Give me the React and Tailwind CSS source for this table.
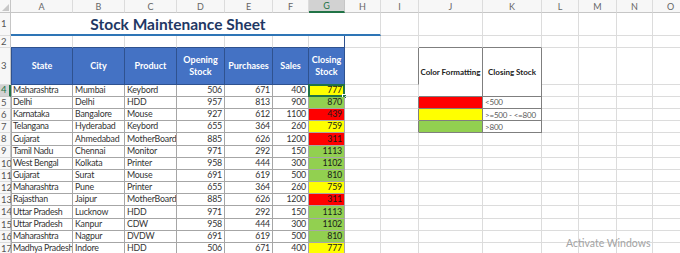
import React from "react";
import { twMerge } from "tailwind-merge";

const letters = ["A", "B", "C", "D", "E", "F", "G", "H", "I", "J", "K", "L", "M", "N", "O"];

const stock = [
  ["Maharashtra", "Mumbai", "Keybord", 506, 671, 400, 777, "y"],
  ["Delhi", "Delhi", "HDD", 957, 813, 900, 870, "g"],
  ["Karnataka", "Bangalore", "Mouse", 927, 612, 1100, 439, "r"],
  ["Telangana", "Hyderabad", "Keybord", 655, 364, 260, 759, "y"],
  ["Gujarat", "Ahmedabad", "MotherBoard", 885, 626, 1200, 311, "r"],
  ["Tamil Nadu", "Chennai", "Monitor", 971, 292, 150, 1113, "g"],
  ["West Bengal", "Kolkata", "Printer", 958, 444, 300, 1102, "g"],
  ["Gujarat", "Surat", "Mouse", 691, 619, 500, 810, "g"],
  ["Maharashtra", "Pune", "Printer", 655, 364, 260, 759, "y"],
  ["Rajasthan", "Jaipur", "MotherBoard", 885, 626, 1200, 311, "r"],
  ["Uttar Pradesh", "Lucknow", "HDD", 971, 292, 150, 1113, "g"],
  ["Uttar Pradesh", "Kanpur", "CDW", 958, 444, 300, 1102, "g"],
  ["Maharashtra", "Nagpur", "DVDW", 691, 619, 500, 810, "g"],
  ["Madhya Pradesh", "Indore", "HDD", 506, 671, 400, 777, "y"],
];

const fills = { y: "bg-[#ffff00]", g: "bg-[#92d050]", r: "bg-[#ff0000]" };

const legend = [
  ["r", "<500"],
  ["y", ">=500 - <=800"],
  ["g", ">800"],
];

const Cell = ({ className, children }) => (
  <div
    className={twMerge(
      "relative flex items-center overflow-hidden whitespace-nowrap border-r border-b border-[#dcdcdc] px-[2px] text-[8.8px] leading-none tracking-[-0.2px] text-[#333]",
      className
    )}
  >
    {children}
  </div>
);

const RowNum = ({ n, active }) => (
  <div
    className={
      active
        ? "flex items-center border-r-2 border-b border-r-[#217346] border-b-[#c6c6c6] bg-[#d2d2d2] pl-[1px] text-[9.5px] leading-none text-[#217346]"
        : "flex items-center border-r border-b border-r-[#c6c6c6] border-b-[#dcdcdc] bg-[#f7f7f7] pl-[1px] text-[9.5px] leading-none text-[#555]"
    }
  >
    {n}
  </div>
);

const blank = (from, to, extra = {}) =>
  letters.slice(from, to).map((l) => <Cell key={l} className={extra[l]} />);

const App = () => {
  return (
    <div className="relative h-[253px] w-[680px] overflow-hidden bg-white font-['Lato',sans-serif]">
      <div className="grid grid-cols-[11px_62px_52px_52px_48px_48px_36px_36px_36px_38px_64px_59px_37px_38px_36px_36px] grid-rows-[13px_23px_12px_36.6px_repeat(14,12.2px)]">
        {/* ---- column letters ---- */}
        <div className="relative border-r border-b border-[#c6c6c6] bg-[#f7f7f7]">
          <svg className="absolute right-[1px] bottom-[1px]" width="7" height="7" viewBox="0 0 7 7">
            <polygon points="7,0 7,7 0,7" fill="#c8c8c8" />
          </svg>
        </div>
        {letters.map((l) =>
          l === "G" ? (
            <div
              key={l}
              className="flex items-center justify-center border-r border-b-2 border-r-[#c6c6c6] border-b-[#217346] bg-[#d2d2d2] text-[9px] leading-none text-[#217346]"
            >
              {l}
            </div>
          ) : (
            <div
              key={l}
              className="flex items-center justify-center border-r border-b border-r-[#dcdcdc] border-b-[#c6c6c6] bg-[#f7f7f7] text-[9px] leading-none text-[#666]"
            >
              {l}
            </div>
          )
        )}

        {/* ---- row 1 : title ---- */}
        <RowNum n={1} />
        <div className="col-span-7 flex items-end justify-center border-b-2 border-b-[#2e75b6] pb-[2px] text-[15.5px] leading-none font-bold text-[#1f3864]">
          Stock Maintenance Sheet
        </div>
        <Cell className="border-b-2 border-b-[#2e75b6]" />
        {blank(8, 15)}

        {/* ---- row 2 ---- */}
        <RowNum n={2} />
        {blank(0, 15, {
          A: "border-b-[#2f528f]",
          B: "border-b-[#2f528f]",
          C: "border-b-[#2f528f]",
          D: "border-b-[#2f528f]",
          E: "border-b-[#2f528f]",
          F: "border-b-[#2f528f]",
          G: "border-r-[#2f528f] border-b-[#2f528f]",
          J: "border-b-[#7f7f7f]",
          K: "border-b-[#7f7f7f]",
        })}

        {/* ---- row 3 : table header + legend header ---- */}
        <RowNum n={3} />
        {["State", "City", "Product", "Opening Stock", "Purchases", "Sales", "Closing Stock"].map((h, i) => (
          <div
            key={h}
            className={twMerge(
              "flex items-center justify-center border-r border-b border-[#2f528f] bg-[#4472c4] px-[5px] text-center text-[9px] leading-[11.7px] font-bold text-white",
              i === 0 && "border-l"
            )}
          >
            {h}
          </div>
        ))}
        <Cell />
        <Cell className="border-r-[#7f7f7f]" />
        <div className="row-span-2 flex items-center justify-center whitespace-nowrap border-r border-b border-[#7f7f7f] text-[8px] leading-none font-bold text-[#222]">
          Color Formatting
        </div>
        <div className="row-span-2 flex items-center justify-center whitespace-nowrap border-r border-b border-[#7f7f7f] text-[8px] leading-none font-bold text-[#222]">
          Closing Stock
        </div>
        {blank(11, 15)}

        {/* ---- data rows ---- */}
        {stock.map((s, r) => {
          const n = r + 4;
          const line = "border-[#a6a6a6]";
          return (
            <React.Fragment key={n}>
              <RowNum n={n} active={n === 4} />
              <Cell className={twMerge(line, "border-l px-[1px] tracking-[-0.3px]")}>{s[0]}</Cell>
              <Cell className={line}>{s[1]}</Cell>
              <Cell className={line}>{s[2]}</Cell>
              <Cell className={twMerge(line, "justify-end")}>{s[3]}</Cell>
              <Cell className={twMerge(line, "justify-end")}>{s[4]}</Cell>
              <Cell className={twMerge(line, "justify-end")}>{s[5]}</Cell>
              <Cell className={twMerge(line, "justify-end overflow-visible text-[#1a1a1a]", fills[s[7]])}>
                {s[6]}
                {n === 4 && (
                  <>
                    <span className="absolute -top-px -left-px -right-px -bottom-px border-2 border-[#217346]" />
                    <span className="absolute -right-[3px] -bottom-[3px] h-[5px] w-[5px] border border-white bg-[#217346]" />
                  </>
                )}
              </Cell>
              <Cell />
              <Cell className={n >= 5 && n <= 7 ? "border-r-[#7f7f7f]" : ""} />
              {n >= 5 && n <= 7 && (
                <>
                  <Cell className={twMerge("border-[#7f7f7f]", fills[legend[n - 5][0]])} />
                  <Cell className="border-[#7f7f7f] text-[8px] text-[#595959]">{legend[n - 5][1]}</Cell>
                </>
              )}
              {n > 7 && (
                <>
                  <Cell />
                  <Cell />
                </>
              )}
              {blank(11, 15)}
            </React.Fragment>
          );
        })}
      </div>

      {/* ---- activation watermark ---- */}
      <div className="absolute left-[566px] top-[238px] text-[10.5px] leading-none text-[#a3a3a3]">
        Activate Windows
        <div className="mt-[3px] text-[8px] text-[#a3a3a3]">Go to Settings to activate Windows.</div>
      </div>
    </div>
  );
};

export default App;
